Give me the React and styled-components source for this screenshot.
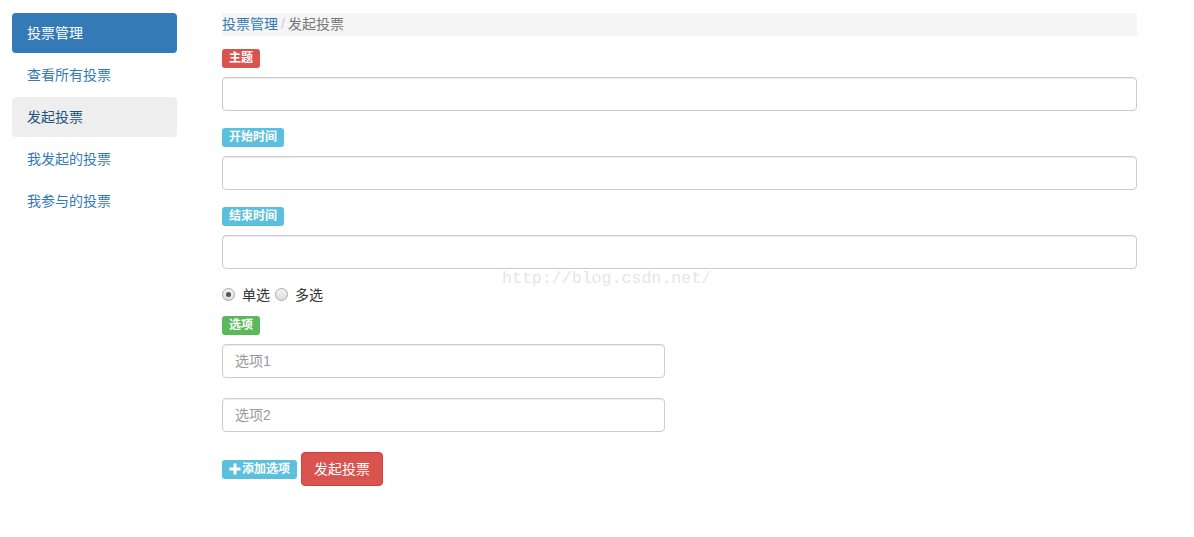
import React from "react";
import styled, { createGlobalStyle } from "styled-components";

const GlobalStyle = createGlobalStyle`
  body {
    margin: 0;
    background: #fff;
    font-family: "Liberation Sans", "Noto Sans CJK SC", sans-serif;
    font-size: 14px;
    color: #333;
  }
`;

const Page = styled.div`
  position: relative;
  display: flex;
  gap: 45px;
  padding: 13px 0 0 12px;
  min-height: 524px;
`;

const Nav = styled.ul`
  list-style: none;
  margin: 0;
  padding: 0;
  width: 165px;
  display: flex;
  flex-direction: column;
  gap: 2px;
`;

const NavItem = styled.li`
  padding: 10px 15px;
  line-height: 20px;
  border-radius: 4px;
  color: ${(p) => (p.$active ? "#fff" : p.$hover ? "#23527c" : "#337ab7")};
  background: ${(p) => (p.$active ? "#337ab7" : p.$hover ? "#eee" : "transparent")};
`;

const Main = styled.div`
  width: 915px;
  display: flex;
  flex-direction: column;
`;

const Breadcrumb = styled.div`
  height: 23px;
  line-height: 23px;
  background: #f5f5f5;
  margin-bottom: 13px;
  color: #777;
  a {
    color: #337ab7;
    text-decoration: none;
  }
  span.sep {
    color: #ccc;
    padding: 0 3px;
  }
`;

const colors = {
  danger: "#d9534f",
  info: "#5bc0de",
  success: "#5cb85c",
};

const Label = styled.span`
  box-sizing: border-box;
  align-self: ${(p) => (p.$inline ? "center" : "flex-start")};
  display: inline-flex;
  align-items: center;
  gap: 1px;
  height: 19px;
  padding: 0 7px;
  font-size: 12px;
  line-height: 13px;
  font-weight: bold;
  color: #fff;
  border-radius: 3px;
  background: ${(p) => colors[p.$kind]};
  margin-bottom: ${(p) => (p.$inline ? "0" : "9px")};
`;

const Input = styled.input`
  box-sizing: border-box;
  width: ${(p) => (p.$half ? "443px" : "100%")};
  height: 34px;
  padding: 6px 12px;
  border: 1px solid #ccc;
  border-radius: 4px;
  box-shadow: inset 0 1px 1px rgba(0, 0, 0, 0.075);
  font-family: inherit;
  font-size: 14px;
  color: #555;
  margin-bottom: ${(p) => p.$gap || "17px"};
  &::placeholder {
    color: #999;
  }
`;

const RadioRow = styled.div`
  display: flex;
  align-items: center;
  height: 18px;
  margin: -1px 0 13px;
  color: #333;
`;

const Radio = styled.span`
  box-sizing: border-box;
  width: 13px;
  height: 13px;
  border-radius: 50%;
  border: 1px solid #a9a9a9;
  background: linear-gradient(#f5f5f5, #dcdcdc);
  display: inline-flex;
  align-items: center;
  justify-content: center;
  margin-right: 7px;
  &::after {
    content: "";
    display: ${(p) => (p.$checked ? "block" : "none")};
    width: 5px;
    height: 5px;
    border-radius: 50%;
    background: #555;
  }
`;

const RadioText = styled.span`
  margin-right: 5px;
`;

const Actions = styled.div`
  display: flex;
  align-items: center;
  gap: 4px;
  margin-top: 3px;
`;

const Button = styled.button`
  height: 34px;
  padding: 6px 12px;
  font-family: inherit;
  font-size: 14px;
  line-height: 20px;
  color: #fff;
  background: #d9534f;
  border: 1px solid #d43f3a;
  border-radius: 4px;
`;

const Watermark = styled.div`
  position: absolute;
  left: 502px;
  top: 269px;
  font-family: "Liberation Mono", monospace;
  font-size: 16.6px;
  color: #e6e6e6;
  pointer-events: none;
`;

const PlusIcon = () => (
  <svg width="12" height="12" viewBox="0 0 12 12">
    <path d="M4.5 0.5h3v4h4v3h-4v4h-3v-4h-4v-3h4z" fill="#fff" />
  </svg>
);

const navItems = [
  { text: "投票管理", active: true },
  { text: "查看所有投票" },
  { text: "发起投票", hover: true },
  { text: "我发起的投票" },
  { text: "我参与的投票" },
];

export default function App() {
  return (
    <>
      <GlobalStyle />
      <Page>
        <Nav>
          {navItems.map((item) => (
            <NavItem key={item.text} $active={item.active} $hover={item.hover}>
              {item.text}
            </NavItem>
          ))}
        </Nav>
        <Main>
          <Breadcrumb>
            <a href="#">投票管理</a>
            <span className="sep">/</span>
            发起投票
          </Breadcrumb>

          <Label $kind="danger">主题</Label>
          <Input type="text" />

          <Label $kind="info">开始时间</Label>
          <Input type="text" />

          <Label $kind="info">结束时间</Label>
          <Input type="text" />

          <RadioRow>
            <Radio $checked />
            <RadioText>单选</RadioText>
            <Radio />
            <RadioText>多选</RadioText>
          </RadioRow>

          <Label $kind="success">选项</Label>
          <Input type="text" $half placeholder="选项1" $gap="20px" />
          <Input type="text" $half placeholder="选项2" />

          <Actions>
            <Label $kind="info" $inline>
              <PlusIcon />
              添加选项
            </Label>
            <Button>发起投票</Button>
          </Actions>
        </Main>
        <Watermark>http://blog.csdn.net/</Watermark>
      </Page>
    </>
  );
}
